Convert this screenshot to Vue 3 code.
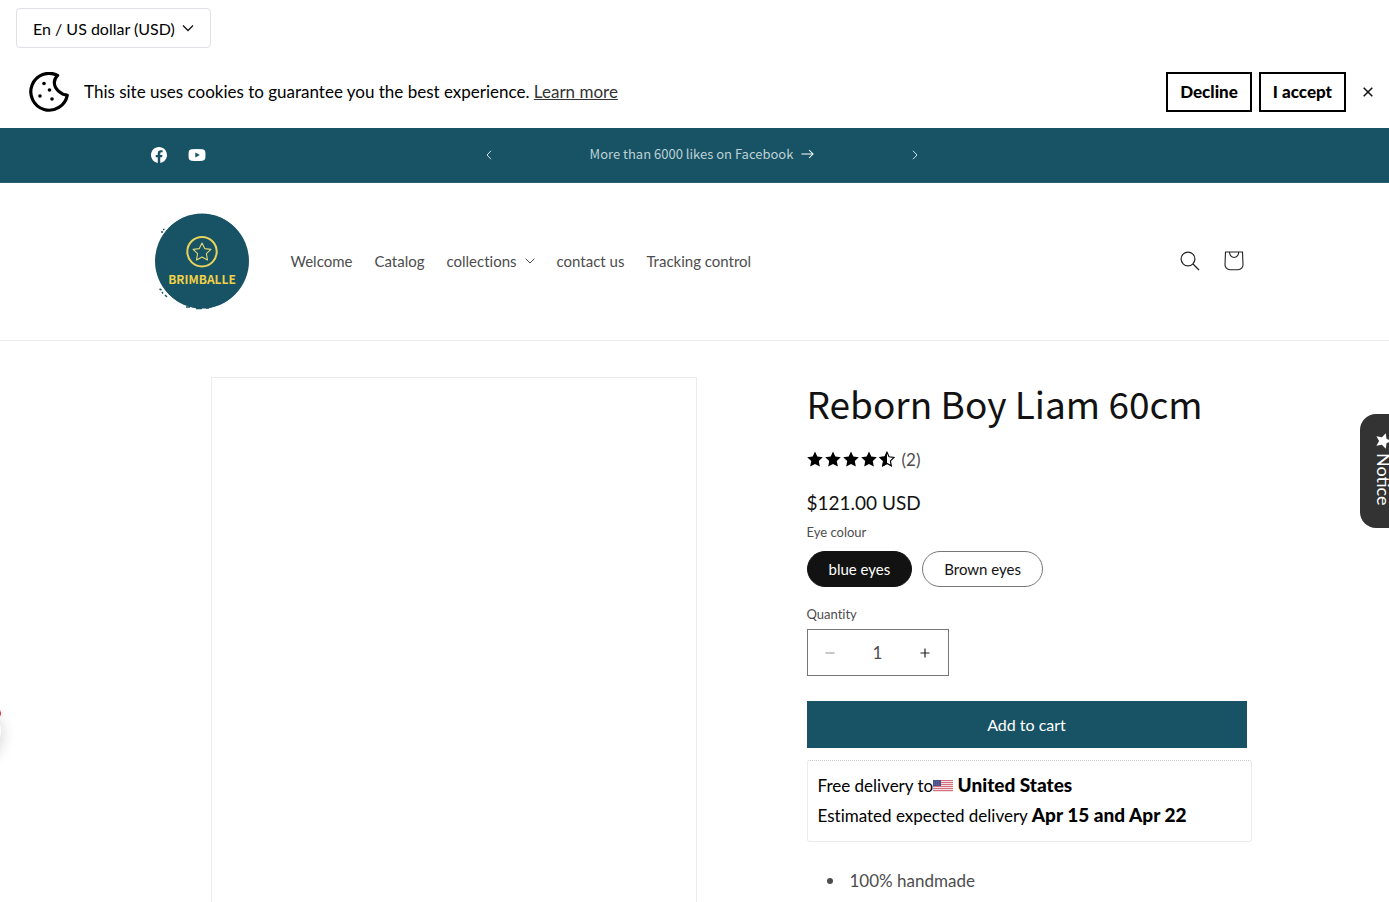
<template>
    <div class="currency-bar">
        <label class="currency-box">
            <span class="sr-only">Currency</span>
            <select class="currency-select" v-model="currency">
                <option>En / US dollar (USD)</option>
            </select>
            <svg class="currency-arrow" viewBox="0 0 12 12" width="12" height="12">
                <path d="M1 3.5 6 8.5 11 3.5" fill="none" stroke="#111" stroke-width="1.3" />
            </svg>
        </label>
    </div>

    <section v-if="showCookies" class="cookie-bar">
        <svg class="cookie-icon" viewBox="0 0 40 40" width="40" height="40">
            <path d="M28.600 3.400A18.400 18.400 0 1 0 38.300 23.200C32 23 25.500 17 25.300 10.500 25.300 7.500 27 5 28.600 3.400Z" fill="none"
                stroke="#000" stroke-width="3.2" stroke-linejoin="round" />
            <circle cx="15" cy="11.500" r="1.8" />
            <circle cx="20.500" cy="18" r="1.8" />
            <circle cx="11" cy="24" r="1.8" />
            <circle cx="23" cy="27" r="1.8" />
        </svg>
        <p class="cookie-text">This site uses cookies to guarantee you the best experience. <a href="#">Learn more</a></p>
        <button class="cookie-button" @click="showCookies = false">Decline</button>
        <button class="cookie-button" @click="showCookies = false">I accept</button>
        <button class="cookie-close" aria-label="Close" @click="showCookies = false">
            <svg viewBox="0 0 10 10" width="10" height="10">
                <path d="M.7.7l8.600 8.600M9.300.7.7 9.300" stroke="#111" stroke-width="1.5" />
            </svg>
        </button>
    </section>

    <div class="announcement">
        <div class="announcement-inner">
            <div class="social-list">
                <a href="#" aria-label="Facebook">
                    <svg viewBox="0 0 18 18" width="18" height="18">
                        <path fill="#fff"
                            d="M17 9.050C17 4.600 13.420 1 9 1S1 4.600 1 9.050c0 4.010 2.930 7.340 6.750 7.950v-5.630H5.720V9.050h2.030V7.280c0-2.020 1.200-3.130 3.020-3.130.88 0 1.790.16 1.790.16v1.980h-1.010c-.99 0-1.300.62-1.300 1.260v1.500h2.220l-.36 2.320h-1.860V17C14.070 16.390 17 13.060 17 9.050Z" />
                    </svg>
                </a>
                <a href="#" aria-label="YouTube">
                    <svg viewBox="0 0 18 18" width="18" height="18">
                        <path fill="#fff" fill-rule="evenodd"
                            d="M3.500 3.200Q9 2.600 14.500 3.200 17 3.400 17.300 5.800 17.700 9 17.300 12.200 17 14.600 14.500 14.800 9 15.400 3.500 14.800 1 14.600.7 12.200.3 9 .7 5.800 1 3.400 3.500 3.200ZM7.300 6.400v5.200L11.800 9Z" />
                    </svg>
                </a>
            </div>
            <div class="slider">
                <button class="slider-button" aria-label="Previous announcement">
                    <svg viewBox="0 0 8 10" width="8" height="10">
                        <path d="M6 .8 2 5l4 4.200" fill="none" stroke="#d5e2e6" />
                    </svg>
                </button>
                <a href="#" class="announcement-link">
                    <span>More than 6000 likes on Facebook</span>
                    <svg viewBox="0 0 14 10" width="13" height="10">
                        <path d="M.5 5h12.500M8.700.7 13 5 8.700 9.300" fill="none" stroke="#fff" stroke-width="1.1" />
                    </svg>
                </a>
                <button class="slider-button" aria-label="Next announcement">
                    <svg viewBox="0 0 8 10" width="8" height="10">
                        <path d="M2 .8 6 5 2 9.200" fill="none" stroke="#d5e2e6" />
                    </svg>
                </button>
            </div>
        </div>
    </div>

    <header class="header">
        <div class="header-inner">
            <a href="#" class="logo" aria-label="Brimballe">
                <svg viewBox="0 0 100 100" width="100" height="100">
                    <circle cx="50" cy="50" r="47" fill="#175364" />
                    <ellipse cx="50" cy="50" rx="46" ry="47.600" fill="#175364" />
                    <path d="M11 18.500h1.500M9 21h2M7.500 78l2 1M10 81l1 1.500M13 84l2 2M34 96h4M44 97.500h6M54 97h3" stroke="#175364"
                        stroke-width="1.400" />
                    <circle cx="50" cy="40.700" r="14.700" fill="none" stroke="#ead35c" stroke-width="2" />
                    <path d="M50 32l2.700 5.600 6.200.8-4.500 4.300 1.100 6.200L50 45.900l-5.500 3 1.100-6.200-4.500-4.300 6.200-.8Z" fill="none"
                        stroke="#e3d873" stroke-width="1.100" stroke-linejoin="round" />
                    <text x="50" y="73" text-anchor="middle" class="logo-text">BRIMBALLE</text>
                </svg>
            </a>
            <nav>
                <ul class="menu">
                    <li v-for="item in menuItems" :key="item.title">
                        <a href="#" class="menu-link">
                            {{ item.title }}
                            <svg v-if="item.children" viewBox="0 0 10 6" width="10" height="6">
                                <path d="M.6.7 5 5 9.400.7" fill="none" stroke="#4d4d4d" />
                            </svg>
                        </a>
                    </li>
                </ul>
            </nav>
            <div class="header-icons">
                <button class="icon-button" aria-label="Search">
                    <svg viewBox="0 0 20 20" width="20" height="20">
                        <g fill="none" stroke="#222" stroke-width="1.200">
                            <circle cx="8" cy="8" r="6.900" />
                            <path d="M13 13l6 6" />
                        </g>
                    </svg>
                </button>
                <a href="#" class="icon-button" aria-label="Cart">
                    <svg viewBox="0 0 20 20" width="20" height="20">
                        <g fill="none" stroke="#222" stroke-width="1.100">
                            <path d="M1.500 1h17l.5 12.500a5 5 0 0 1-5 5.300H6a5 5 0 0 1-5-5.300Z" />
                            <path d="M5.500 1a4.600 5.500 0 0 0 9.200 0" />
                        </g>
                    </svg>
                </a>
            </div>
        </div>
    </header>

    <main class="product">
        <div class="gallery"></div>
        <div class="info">
            <h1 class="title">Reborn Boy Liam 60cm</h1>
            <div class="rating">
                <svg v-for="n in 5" :key="n" viewBox="0 0 16 16" width="16" height="16">
                    <path v-if="n < 5" :d="star" />
                    <template v-else>
                        <path :d="star" fill="none" stroke="#000" stroke-width="1.300" transform="translate(.8 .8) scale(.9)" />
                        <path d="M8 .5 5.700 5.500.2 6.200l4 3.900-1 5.500L8 12.900Z" />
                    </template>
                </svg>
                <span class="rating-count">(2)</span>
            </div>
            <p class="price">$121.00 USD</p>

            <fieldset class="variants">
                <legend class="field-label">Eye colour</legend>
                <div class="variant-list">
                    <label v-for="colour in colours" :key="colour" class="variant" :class="{ active: eyes === colour }">
                        <input class="sr-only" type="radio" name="eyes" :value="colour" v-model="eyes">
                        {{ colour }}
                    </label>
                </div>
            </fieldset>

            <label class="field-label" for="quantity">Quantity</label>
            <div class="quantity">
                <button :disabled="quantity <= 1" aria-label="Decrease quantity" @click="quantity--">
                    <svg viewBox="0 0 10 10" width="10" height="10">
                        <path d="M.5 5h9" stroke="#222" />
                    </svg>
                </button>
                <input id="quantity" type="text" inputmode="numeric" v-model.number="quantity">
                <button aria-label="Increase quantity" @click="quantity++">
                    <svg viewBox="0 0 10 10" width="10" height="10">
                        <path d="M.5 5h9M5 .5v9" stroke="#222" stroke-width="1.200" />
                    </svg>
                </button>
            </div>

            <button class="add-button">Add to cart</button>

            <div class="delivery">
                <p>Free delivery to<svg class="flag" viewBox="0 0 20 12" width="20" height="12">
                        <path fill="#f1dfe2" d="M0 0h20v12H0z" />
                        <path d="M0 .5h20M0 2.500h20M0 4.500h20M0 6.500h20M0 8.500h20M0 10.500h20" stroke="#d9707f" />
                        <path fill="#4a4f86" d="M0 0h8v6H0z" />
                        <path d="M1 1.500h6M1 3h6M1 4.500h6" stroke="#8589b0" stroke-width=".5" stroke-dasharray="1 1" />
                    </svg> <strong>United States</strong></p>
                <p>Estimated expected delivery <strong>Apr 15 and Apr 22</strong></p>
            </div>

            <ul class="description">
                <li>100% handmade</li>
            </ul>
        </div>
    </main>

    <button class="notice-tab">
        <svg viewBox="0 0 16 16" width="16" height="16">
            <path :d="star" fill="#fff" transform="rotate(90 8 8)" />
        </svg>
        <span>Notice</span>
    </button>
    <div class="chat-bubble"></div>
</template>

<script setup>
import { ref } from 'vue';

const currency = ref('En / US dollar (USD)');
const showCookies = ref(true);

const menuItems = [
    { title: 'Welcome' },
    { title: 'Catalog' },
    { title: 'collections', children: true },
    { title: 'contact us' },
    { title: 'Tracking control' }
];

const colours = ['blue eyes', 'Brown eyes'];
const eyes = ref('blue eyes');
const quantity = ref(1);

const star = 'M8 .5l2.300 5 5.500.7-4 3.900 1 5.500L8 12.900l-4.800 2.700 1-5.500-4-3.900 5.500-.7Z';
</script>

<style>
body {
    margin: 0;
    background: #fff;
}

#app {
    font-family: Lato, "Liberation Sans", sans-serif;
    font-size: 17px;
    font-variant-ligatures: none;
    color: #4d4d4d;
}
</style>

<style scoped>
* {
    box-sizing: border-box;
}

p,
ul,
h1 {
    margin: 0;
    padding: 0;
}

button,
input,
select {
    font-family: inherit;
    color: inherit;
}

button {
    border: 0;
    background: none;
    padding: 0;
    cursor: pointer;
}

svg {
    display: block;
    flex: none;
}

.sr-only {
    position: absolute;
    width: 1px;
    height: 1px;
    margin: 0;
    opacity: 0;
    overflow: hidden;
    appearance: none;
}

/* currency */
.currency-bar {
    display: flex;
    padding: 8px 16px;
}

.currency-box {
    position: relative;
    height: 40px;
    border: 1px solid #dfe1e6;
    border-radius: 4px;
}

.currency-select {
    appearance: none;
    height: 38px;
    padding: 0 34px 0 16px;
    border: 0;
    background: transparent;
    font-size: 16px;
    color: #000;
}

.currency-arrow {
    position: absolute;
    right: 16px;
    top: 13px;
    pointer-events: none;
}

/* cookies */
.cookie-bar {
    display: flex;
    align-items: center;
    height: 72px;
    padding: 0 16px 0 29px;
    color: #000;
}

.cookie-text {
    flex: 1;
    margin-left: 15px;
    padding-bottom: 2px;
}

.cookie-text a {
    color: #333;
}

.cookie-button {
    height: 40px;
    margin-right: 7px;
    padding: 0 12px 2px;
    border: 2px solid #000;
    font-size: 17px;
    font-weight: 900;
}

.cookie-close {
    margin-left: 10px;
}

/* announcement */
.announcement {
    background: #175364;
    border-bottom: 1px solid #2a6070;
}

.announcement-inner {
    display: grid;
    grid-template-columns: 1fr 456px 1fr;
    align-items: center;
    max-width: 1200px;
    height: 54px;
    margin: 0 auto;
    padding: 0 48px;
}

.social-list {
    display: flex;
    gap: 20px;
    padding-left: 7px;
}

.slider {
    display: flex;
    align-items: center;
    justify-content: space-between;
    padding: 0 3px 0 18px;
}

.announcement-link {
    display: flex;
    align-items: center;
    gap: 8px;
    padding-bottom: 3px;
    color: #bed0d5;
    font-family: "Noto Sans CJK SC", sans-serif;
    font-size: 13px;
    line-height: 20px;
    text-decoration: none;
}

/* header */
.header {
    padding-bottom: 2px;
    border-bottom: 1px solid #ececec;
}

.header-inner {
    display: flex;
    align-items: center;
    max-width: 1200px;
    height: 155px;
    margin: 0 auto;
    padding: 0 39px 0 57px;
}

.logo {
    margin-right: 39px;
}

.logo-text {
    fill: #f0d048;
    font-family: "Noto Sans CJK SC", sans-serif;
    font-size: 12px;
    font-weight: 700;
}

.menu {
    display: flex;
    gap: 22px;
    list-style: none;
}

.menu-link {
    display: flex;
    align-items: center;
    gap: 8px;
    color: #4d4d4d;
    font-size: 15px;
    line-height: 20px;
    text-decoration: none;
}

.header-icons {
    display: flex;
    margin-left: auto;
}

.icon-button {
    display: grid;
    place-items: center;
    width: 44px;
    height: 44px;
}

/* product */
.product {
    display: grid;
    grid-template-columns: 1fr 440px;
    gap: 110px;
    max-width: 1200px;
    margin: 0 auto;
    padding: 36px 48px 0 116px;
}

.gallery {
    aspect-ratio: 3 / 4;
    border: 1px solid #ececec;
}

.title {
    color: #121212;
    font-family: "Noto Sans CJK SC", sans-serif;
    font-size: 37px;
    font-weight: 400;
    line-height: 52px;
}

.rating {
    display: flex;
    align-items: center;
    gap: 2px;
    height: 24px;
    margin-top: 18px;
}

.rating-count {
    margin-left: 5px;
}

.price {
    margin-top: 20px;
    color: #121212;
    font-size: 19px;
    line-height: 24px;
}

.field-label {
    display: block;
    padding: 0;
    font-size: 13px;
    line-height: 20px;
}

.variants {
    min-width: 0;
    margin: 7px 0 17px;
    padding: 0;
    border: 0;
}

.variant-list {
    display: flex;
    gap: 10px;
    padding-top: 9px;
}

.variant {
    height: 36px;
    padding: 0 21px;
    border: 1px solid #777;
    border-radius: 18px;
    color: #121212;
    font-size: 15px;
    line-height: 34px;
    cursor: pointer;
}

.variant.active {
    border-color: #121212;
    background: #121212;
    color: #fff;
}

.quantity {
    display: flex;
    width: 142px;
    height: 47px;
    margin-top: 5px;
    border: 1px solid #777;
}

.quantity button {
    display: grid;
    place-items: center;
    width: 45px;
}

.quantity button:disabled {
    opacity: 0.5;
}

.quantity input {
    flex: 1;
    min-width: 0;
    padding: 0;
    border: 0;
    background: none;
    font-size: 17px;
    text-align: center;
}

.add-button {
    display: block;
    width: 100%;
    height: 47px;
    margin: 25px 0 12px;
    background: #175364;
    color: #fff;
    font-size: 16px;
}

.delivery {
    width: calc(100% + 5px);
    padding: 10px;
    border: 1px solid #ececec;
    border-top: 1px dotted #ccc;
    border-radius: 3px;
    color: #000;
    line-height: 30px;
}

.delivery strong {
    font-size: 19px;
    font-weight: 900;
    line-height: 20px;
}

.flag {
    display: inline-block;
}

.description {
    margin-top: 24px;
    padding-left: 20px;
    line-height: 30px;
    list-style: none;
}

.description li {
    display: flex;
    align-items: center;
    gap: 17px;
}

.description li::before {
    content: "";
    width: 6px;
    height: 6px;
    border-radius: 50%;
    background: #4d4d4d;
}

/* floating widgets */
.notice-tab {
    position: fixed;
    top: 414px;
    right: -19px;
    display: flex;
    flex-direction: column;
    align-items: center;
    gap: 4px;
    width: 48px;
    height: 114px;
    padding-top: 19px;
    border-radius: 16px 0 0 16px;
    background: #333;
    color: #fff;
    font-size: 18px;
}

.notice-tab span {
    writing-mode: vertical-rl;
}

.chat-bubble {
    position: fixed;
    top: 706px;
    left: -49px;
    width: 50px;
    height: 50px;
    border-radius: 50%;
    background: #fff;
    box-shadow: 0 4px 16px rgba(0, 0, 0, 0.2);
}

.chat-bubble::after {
    content: "";
    position: absolute;
    top: 3px;
    right: 0;
    width: 9px;
    height: 9px;
    border-radius: 50%;
    background: #d7262b;
}
</style>
